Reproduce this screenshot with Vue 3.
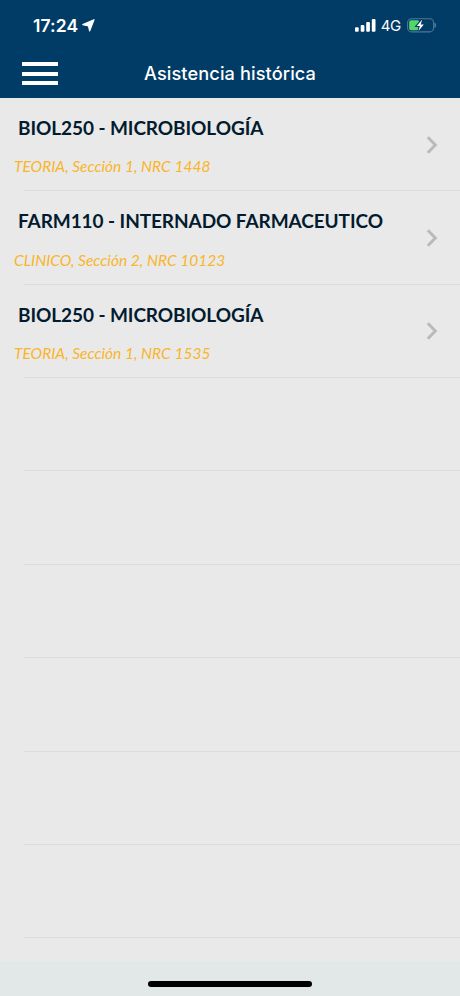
<script setup>
import { ref } from "vue";

const courses = ref([
  { title: "BIOL250 - MICROBIOLOGÍA", detail: "TEORIA, Sección 1, NRC 1448" },
  { title: "FARM110 - INTERNADO FARMACEUTICO", detail: "CLINICO, Sección 2, NRC 10123" },
  { title: "BIOL250 - MICROBIOLOGÍA", detail: "TEORIA, Sección 1, NRC 1535" },
]);

const emptyRows = 6;
</script>

<template>
  <div class="screen">
    <header class="header">
      <div class="status-bar">
        <div class="status-left">
          <span class="time">17:24</span>
          <svg class="location" width="13" height="13" viewBox="0 0 13 13">
            <path d="M12 0.7 L7.6 12 L6.5 6.8 L0.8 5.6 Z" fill="#fff" stroke="#fff" stroke-width="1.2" stroke-linejoin="round" />
          </svg>
        </div>
        <div class="status-right">
          <svg width="21" height="14" viewBox="0 0 21 14" fill="#fff">
            <rect x="0" y="9.2" width="3.7" height="4.5" rx="1" />
            <rect x="5.7" y="6.9" width="3.7" height="6.8" rx="1" />
            <rect x="11.2" y="4.1" width="3.7" height="9.6" rx="1" />
            <rect x="16.8" y="1" width="3.7" height="12.7" rx="1" />
          </svg>
          <span class="network">4G</span>
          <svg class="battery" width="30" height="16" viewBox="0 0 30 16">
            <rect x="0.6" y="1.7" width="26" height="13.2" rx="4" fill="none" stroke="#4f7896" stroke-width="1.1" />
            <path d="M27.9 6.1 Q29.6 8.3 27.9 10.5 Z" fill="#6388a4" stroke="#6388a4" stroke-width="0.6" />
            <rect x="2.2" y="3.3" width="10.2" height="10" rx="2" fill="#55d66b" />
            <path d="M15.2 2.5 L9.8 8.9 H12.9 L11.5 14.1 L16.8 7.4 H13.7 Z" fill="#fff" stroke="#003c66" stroke-width="2.2" paint-order="stroke" />
          </svg>
        </div>
      </div>
      <div class="nav-bar">
        <button class="menu-button" aria-label="Menú">
          <span class="menu-line"></span>
          <span class="menu-line"></span>
          <span class="menu-line"></span>
        </button>
        <h1 class="heading">Asistencia histórica</h1>
      </div>
    </header>
    <main class="list">
      <div v-for="(course, index) in courses" :key="index" class="row">
        <div class="course">
          <h2 class="title">{{ course.title }}</h2>
          <p class="detail">{{ course.detail }}</p>
        </div>
        <svg class="chevron" width="12" height="18" viewBox="0 0 12 18">
          <path d="M1.8 1.3 L9.3 9 L1.8 16.7" fill="none" stroke="#bababb" stroke-width="3" />
        </svg>
      </div>
      <div v-for="n in emptyRows" :key="'empty' + n" class="row"></div>
    </main>
    <footer class="footer">
      <div class="home-indicator"></div>
    </footer>
  </div>
</template>

<style>
body {
  margin: 0;
}
</style>

<style scoped>
.screen {
  width: 100%;
  height: 996px;
  display: flex;
  flex-direction: column;
  background: #e9e9e9;
  overflow: hidden;
}
.header {
  height: 98px;
  flex: none;
  background: #003c66;
  color: #fff;
  font-family: Inter, "Liberation Sans", sans-serif;
}
.status-bar {
  height: 50px;
  display: flex;
  justify-content: space-between;
  align-items: center;
  padding: 0 23px 0 33px;
}
.status-left,
.status-right {
  display: flex;
  align-items: center;
}
.time {
  font-size: 17.5px;
  font-weight: 600;
  line-height: 20px;
  letter-spacing: 0.1px;
  padding-top: 2px;
}
.location {
  margin-left: 4px;
}
.network {
  font-size: 15px;
  font-weight: 400;
  line-height: 18px;
  letter-spacing: -0.3px;
  margin-left: 5px;
  padding-top: 2px;
}
.battery {
  margin-left: 6px;
}
.nav-bar {
  height: 46px;
  display: grid;
  grid-template-columns: 80px 1fr 80px;
  align-items: center;
}
.menu-button {
  width: 36px;
  margin-left: 22px;
  padding: 1px 0 0;
  border: 0;
  background: none;
  display: flex;
  flex-direction: column;
  gap: 5.7px;
}
.menu-line {
  height: 4px;
  background: #fff;
}
.heading {
  margin: 0;
  font-size: 18.2px;
  font-weight: 500;
  line-height: 24px;
  letter-spacing: 0.1px;
  text-align: center;
  white-space: nowrap;
}
.list {
  height: 863px;
  flex: none;
  overflow: hidden;
}
.row {
  height: 93.36px;
  box-sizing: border-box;
  display: flex;
  justify-content: space-between;
  padding: 18px 22px 0 14px;
  background: linear-gradient(#dcdddd, #dcdddd) 24px 100% / 100% 1px no-repeat;
}
.course {
  font-family: Lato, "Liberation Sans", sans-serif;
  white-space: nowrap;
}
.title {
  margin: 0 0 0 4px;
  font-size: 19px;
  font-weight: 700;
  line-height: 24px;
  letter-spacing: -0.08px;
  color: #031b2e;
}
.detail {
  margin: 16.4px 0 0;
  font-size: 16.2px;
  font-style: italic;
  line-height: 20px;
  color: #f9b52b;
  transform: scaleX(0.959);
  transform-origin: left;
}
.chevron {
  margin-top: 19.7px;
}
.footer {
  flex: 1;
  display: flex;
  justify-content: center;
  background: #e2e8e8;
}
.home-indicator {
  width: 164px;
  height: 6px;
  margin-top: 20px;
  border-radius: 3px;
  background: #000;
}
</style>
